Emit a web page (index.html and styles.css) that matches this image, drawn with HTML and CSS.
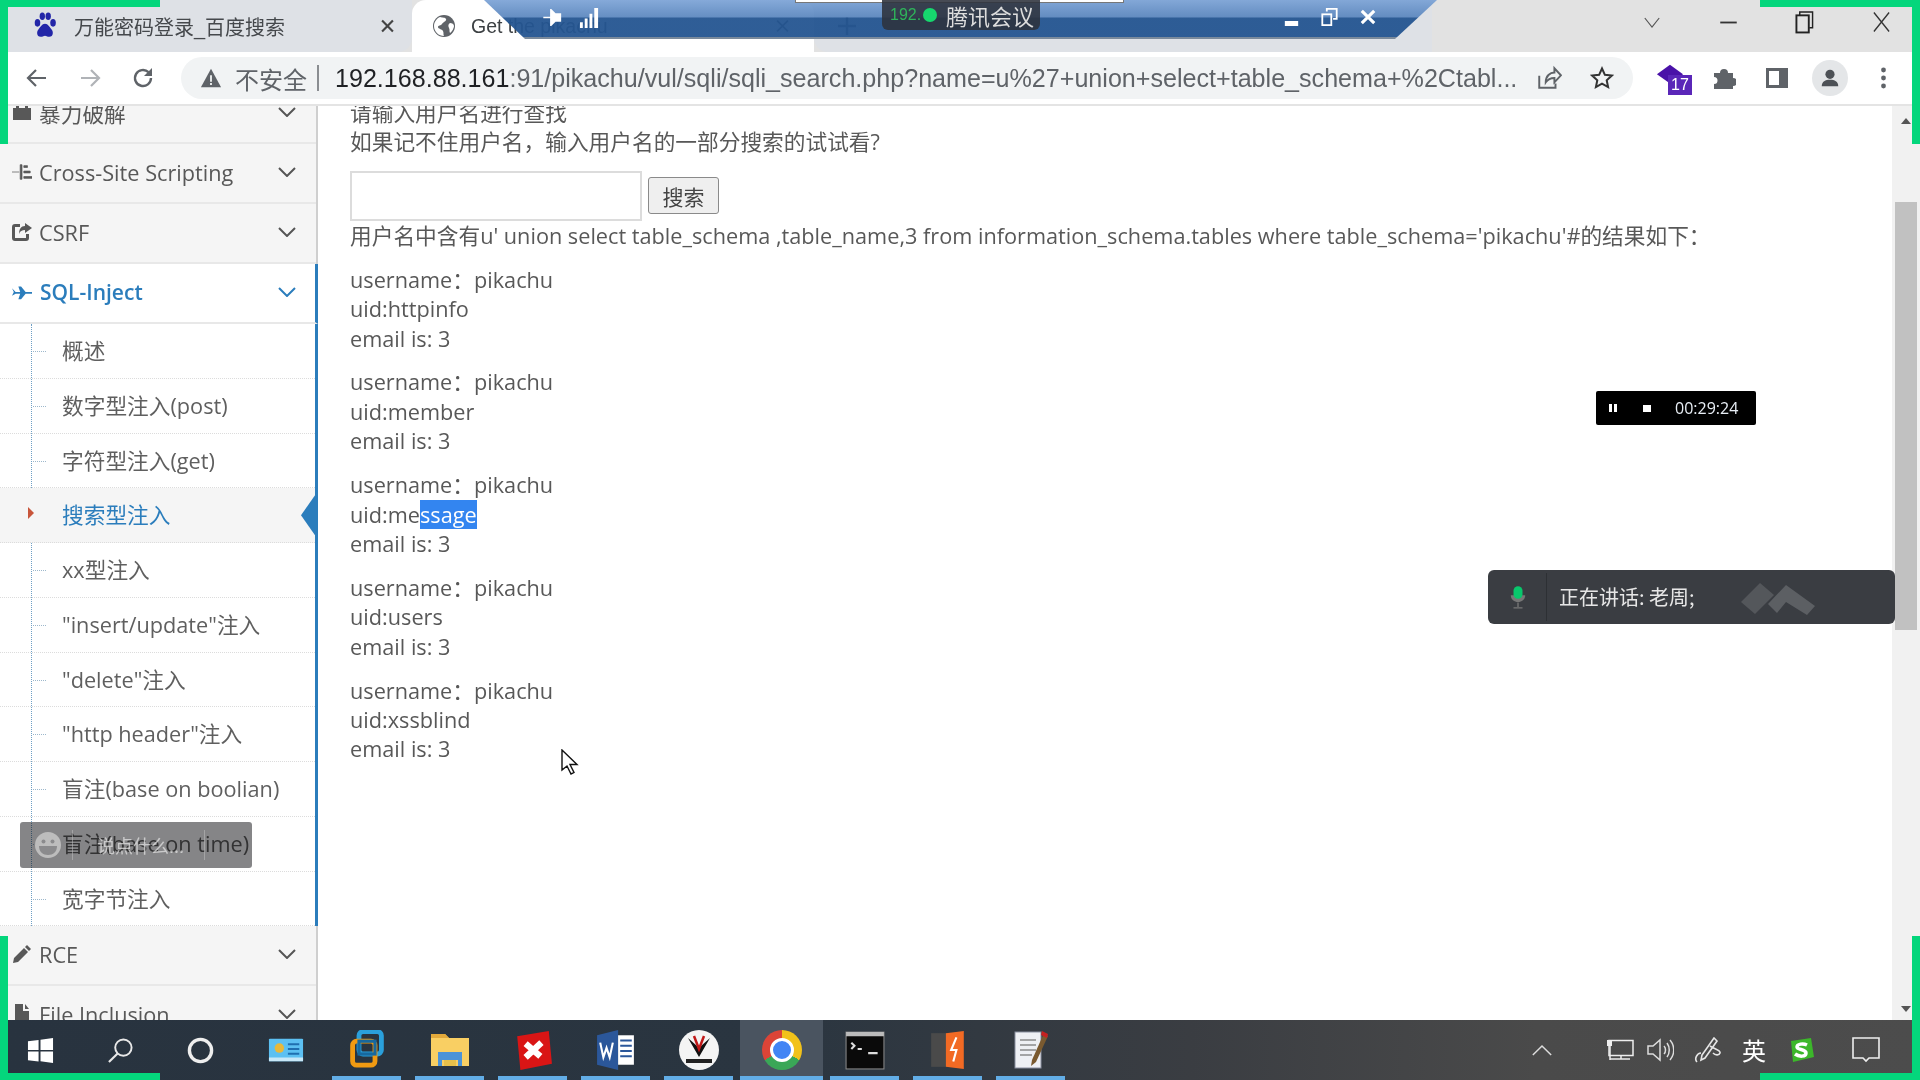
FILE: index.html
```html
<!DOCTYPE html>
<html lang="zh">
<head>
<meta charset="utf-8">
<title>Get the pikachu</title>
<link rel="stylesheet" href="styles.css">
</head>
<body>
<div class="screen">
  <header class="tabstrip">
    <div class="tab tab-inactive">
      <svg class="favicon" viewBox="0 0 24 28"><ellipse cx="5" cy="11" rx="2.6" ry="3.6" fill="#2326a8"/><ellipse cx="9.500" cy="5" rx="2.500" ry="3.500" fill="#2326a8"/><ellipse cx="15" cy="5" rx="2.500" ry="3.500" fill="#2326a8"/><ellipse cx="19.500" cy="11" rx="2.600" ry="3.600" fill="#2326a8"/><path d="M12 12c-3 0-4 3-6 5-2 2-2 7 2 7 2 0 3-1 4-1s2 1 4 1c4 0 4-5 2-7-2-2-3-5-6-5z" fill="#2326a8"/></svg>
      <span class="tab-title">万能密码登录_百度搜索</span>
      <svg class="tab-close" viewBox="0 0 12 12"><path d="M1 1l10 10M11 1L1 11" stroke="#444" stroke-width="2"/></svg>
    </div>
    <div class="tab tab-active">
      <svg class="globe" viewBox="0 0 24 24"><circle cx="12" cy="12" r="11" fill="#5f6368"/><path d="M8 3c3 1 5 0 6 2s-3 3-4 5-4 1-4 3 4 2 5 4 0 4 1 5c-5 0-10-4-10-10 0-4 3-8 6-9zM18 9c2 0 4 1 4 3s-2 6-4 7c-1-2 0-3-1-5s-1-4 1-5z" fill="#fff"/></svg>
      <span class="tab-title-active">Get the pikachu</span>
      <svg class="tab-close" viewBox="0 0 12 12"><path d="M1 1l10 10M11 1L1 11" stroke="#444" stroke-width="1.6"/></svg>
    </div>
    <div class="newtab-area">
      <svg class="plus" viewBox="0 0 20 20"><path d="M10 1v18M1 10h18" stroke="#4a4f55" stroke-width="2.4"/></svg>
    </div>
    <div class="window-controls">
      <svg class="wc wc-chevron" viewBox="0 0 20 12"><path d="M2 1l8 10 8-10" fill="none" stroke="#555" stroke-width="1.300"/></svg>
      <svg class="wc wc-min" viewBox="0 0 20 12"><path d="M1 6h18" stroke="#333" stroke-width="2"/></svg>
      <svg class="wc wc-max" viewBox="0 0 20 24"><rect x="1.500" y="5" width="13" height="18" fill="none" stroke="#222" stroke-width="2"/><path d="M5 5V1.500h13.500V18H15" fill="none" stroke="#222" stroke-width="1.500"/></svg>
      <svg class="wc wc-close" viewBox="0 0 20 24"><path d="M2 2l16 20M18 2L2 22" stroke="#333" stroke-width="1.400"/></svg>
    </div>
  </header>

  <nav class="toolbar">
    <svg class="tool tool-back" viewBox="0 0 24 24"><path d="M21 12H4M11 4l-8 8 8 8" fill="none" stroke="#5f6368" stroke-width="2.200"/></svg>
    <svg class="tool tool-fwd" viewBox="0 0 24 24"><path d="M3 12h17M13 4l8 8-8 8" fill="none" stroke="#b0b3b7" stroke-width="2.200"/></svg>
    <svg class="tool tool-reload" viewBox="0 0 24 24"><path d="M20 12a8 8 0 1 1-2.500-5.800" fill="none" stroke="#5f6368" stroke-width="2.400"/><path d="M21 2v8h-8z" fill="#5f6368"/></svg>
    <div class="omnibox">
      <svg class="warn" viewBox="0 0 24 24"><path d="M12 2L1 22h22z" fill="#5f6368"/><path d="M11 9h2v7h-2zM11 17.500h2v2h-2z" fill="#f1f3f4"/></svg>
      <span class="insecure">不安全</span>
      <span class="pipe"></span>
      <span class="url"><span class="host">192.168.88.161</span>:91/pikachu/vul/sqli/sqli_search.php?name=u%27+union+select+table_schema+%2Ctabl...</span>
      <svg class="omni-icon share" viewBox="0 0 24 24"><path d="M3 10v11h15v-4M9 16c0-6 4-9 8-9V3l6 6.500-6 6.500v-4c-3 0-6 1-8 4z" fill="none" stroke="#5f6368" stroke-width="1.800"/></svg>
      <svg class="omni-icon star" viewBox="0 0 24 24"><path d="M12 2.500l2.900 6.300 6.900.8-5.100 4.700 1.400 6.800-6.100-3.400-6.100 3.400 1.400-6.800L2.200 9.600l6.900-.8z" fill="none" stroke="#333" stroke-width="2"/></svg>
    </div>
    <div class="ext">
      <svg class="ext-shape" viewBox="0 0 30 26"><path d="M15 1l14 10-14 10L1 11z" fill="#4a12a8"/></svg>
      <span class="ext-badge">17</span>
    </div>
    <svg class="tool tool-puzzle" viewBox="0 0 24 24"><path d="M2 7h6a4 4 0 0 1 8 0h5v5a4 4 0 0 1 0 8v3H2v-5a3.500 3.500 0 0 0 0-7z" fill="#5f6368"/></svg>
    <svg class="tool tool-panel" viewBox="0 0 24 24"><path d="M1 2h22v20H1zM4 5v14h10V5z" fill="#5f6368" fill-rule="evenodd"/></svg>
    <div class="avatar"><svg viewBox="0 0 24 24"><circle cx="12" cy="8" r="5" fill="#4d5156"/><path d="M3 21c0-5 4-7 9-7s9 2 9 7z" fill="#4d5156"/></svg></div>
    <svg class="tool tool-kebab" viewBox="0 0 6 24"><circle cx="3" cy="4" r="2.400" fill="#5f6368"/><circle cx="3" cy="12" r="2.400" fill="#5f6368"/><circle cx="3" cy="20" r="2.400" fill="#5f6368"/></svg>
  </nav>

  <div class="viewport">
    <aside class="sidebar">
      <ul class="menu">
        <li class="menu-item"><svg class="mi" viewBox="0 0 20 20"><path d="M1 6h3V3h3v3h6V3h3v3h3v12H1z" fill="#585858"/></svg><span>暴力破解</span><svg class="chev" viewBox="0 0 18 10"><path d="M1 1l8 8 8-8" fill="none" stroke="#555" stroke-width="2"/></svg></li>
        <li class="menu-item"><svg class="mi" viewBox="0 0 22 20"><path d="M0 10h8M9 2h2v16H9zM13 3h4v2h-4zM13 9h7v2h-7zM13 15h9v2h-9z" fill="#585858" stroke="#585858" stroke-width=".8"/></svg><span>Cross-Site Scripting</span><svg class="chev" viewBox="0 0 18 10"><path d="M1 1l8 8 8-8" fill="none" stroke="#555" stroke-width="2"/></svg></li>
        <li class="menu-item"><svg class="mi" viewBox="0 0 20 20"><path d="M14 12v4H3V5h5V2H3a3 3 0 0 0-3 3v11a3 3 0 0 0 3 3h11a3 3 0 0 0 3-3v-4z" fill="#585858"/><path d="M13 1l7 5-7 5V8c-3 0-5 1-6 4 0-5 2-8 6-8z" fill="#585858"/></svg><span>CSRF</span><svg class="chev" viewBox="0 0 18 10"><path d="M1 1l8 8 8-8" fill="none" stroke="#555" stroke-width="2"/></svg></li>
        <li class="menu-item menu-open"><svg class="mi" viewBox="0 0 22 20"><path d="M0 6l2 4-2 4 4-2h5l-2 6 3 0 5-6h7v-2h-7L10 4H7l2 6H4z" fill="#2b7dbc"/></svg><span>SQL-Inject</span><svg class="chev" viewBox="0 0 18 10"><path d="M1 1l8 8 8-8" fill="none" stroke="#2b7dbc" stroke-width="2"/></svg></li>
        <li class="submenu">
          <ul class="sublist">
            <li class="sub-item">概述</li>
            <li class="sub-item">数字型注入(post)</li>
            <li class="sub-item">字符型注入(get)</li>
            <li class="sub-item sub-active">搜索型注入</li>
            <li class="sub-item">xx型注入</li>
            <li class="sub-item">"insert/update"注入</li>
            <li class="sub-item">"delete"注入</li>
            <li class="sub-item">"http header"注入</li>
            <li class="sub-item">盲注(base on boolian)</li>
            <li class="sub-item">盲注(base on time)</li>
            <li class="sub-item">宽字节注入</li>
          </ul>
        </li>
        <li class="menu-item"><svg class="mi" viewBox="0 0 20 20"><path d="M15 1l4 4-2 2-4-4zM12 4l4 4L6 18l-5 1 1-5z" fill="#585858"/></svg><span>RCE</span><svg class="chev" viewBox="0 0 18 10"><path d="M1 1l8 8 8-8" fill="none" stroke="#555" stroke-width="2"/></svg></li>
        <li class="menu-item"><svg class="mi" viewBox="0 0 20 20"><path d="M3 0h8v7h6v13H3zM13 0l4 5h-4z" fill="#585858"/></svg><span>File Inclusion</span><svg class="chev" viewBox="0 0 18 10"><path d="M1 1l8 8 8-8" fill="none" stroke="#555" stroke-width="2"/></svg></li>
      </ul>
    </aside>

    <main class="content">
      <p class="intro">请输入用户名进行查找<br>如果记不住用户名，输入用户名的一部分搜索的试试看?</p>
      <form class="search">
        <input class="search-input" type="text">
        <button class="search-btn" type="button">搜索</button>
      </form>
      <p class="summary">用户名中含有u' union select table_schema ,table_name,3 from information_schema.tables where table_schema='pikachu'#的结果如下：</p>
      <p class="record">username：pikachu<br>uid:httpinfo<br>email is: 3</p>
      <p class="record">username：pikachu<br>uid:member<br>email is: 3</p>
      <p class="record">username：pikachu<br>uid:me<span class="selected">ssage</span><br>email is: 3</p>
      <p class="record">username：pikachu<br>uid:users<br>email is: 3</p>
      <p class="record">username：pikachu<br>uid:xssblind<br>email is: 3</p>
    </main>

    <div class="scrollbar">
      <span class="sb-arrow"></span>
      <span class="sb-thumb"></span>
      <span class="sb-arrow sb-arrow-down"></span>
    </div>
  </div>

  <footer class="taskbar">
    <div class="task task-start"><svg viewBox="0 0 28 28"><path d="M1 4.500l11-1.500v10.500H1zM14 2.800L27 1v12.500H14zM1 15h11v10.500L1 24zM14 15h13v12l-13-1.800z" fill="#fff"/></svg></div>
    <div class="task task-start"><svg viewBox="0 0 28 28"><circle cx="17" cy="11" r="8.500" fill="none" stroke="#e8e8e8" stroke-width="2"/><path d="M11 17L2 26" stroke="#e8e8e8" stroke-width="2.200"/></svg></div>
    <div class="task task-start"><svg viewBox="0 0 28 28"><circle cx="14" cy="14" r="11.500" fill="none" stroke="#eee" stroke-width="3.500"/></svg></div>
    <div class="task task-start task-card"><svg viewBox="0 0 38 26"><rect x="1" y="1" width="36" height="24" rx="1" fill="#5cc0f2"/><circle cx="12" cy="11" r="5" fill="#e8b83a"/><path d="M21 7h12M21 12h12M21 17h12" stroke="#1f6fb0" stroke-width="2"/><path d="M1 21h36v4H1z" fill="#c8e8f8"/></svg></div>
    <div class="task open"><svg viewBox="0 0 42 50"><rect x="11" y="2" width="28" height="28" rx="5" fill="none" stroke="#2aa0dc" stroke-width="6"/><rect x="3" y="14" width="28" height="30" rx="5" fill="none" stroke="#f09a12" stroke-width="6"/><rect x="11" y="14" width="20" height="16" fill="none" stroke="#17689e" stroke-width="4"/></svg></div>
    <div class="task open"><svg viewBox="0 0 40 40"><path d="M1 4h14l4 4h20v28H1z" fill="#f9cf63"/><path d="M1 4h14l4 4H1z" fill="#e2a93b"/><path d="M8 22h24v14h-4v-6H12v6H8z" fill="#4c93d8"/><rect x="14" y="30" width="12" height="6" fill="#e8c04a"/></svg></div>
    <div class="task open"><svg viewBox="0 0 36 38"><path d="M3 6l30-5 3 31-30 6z" fill="#d91515"/><path d="M11 13l14 12M26 12L11 26" stroke="#fff" stroke-width="6"/></svg></div>
    <div class="task open"><svg viewBox="0 0 36 38"><path d="M0 5l20-5v38L0 33z" fill="#2b579a"/><path d="M20 5h15v28H20z" fill="#fff"/><path d="M22 10h11M22 15h11M22 20h11M22 25h11" stroke="#2b579a" stroke-width="2"/><path d="M3 12l3 14 3-9 3 9 3-14" fill="none" stroke="#fff" stroke-width="2"/></svg></div>
    <div class="task open"><svg viewBox="0 0 40 40"><circle cx="20" cy="20" r="20" fill="#f4f4f4"/><path d="M9 8l11 19L31 8l-9 8h-4z" fill="#111"/><path d="M15 6l5 13 5-13" fill="none" stroke="#c01818" stroke-width="2.500"/><path d="M7 29h26v4H7z" fill="#222"/></svg></div>
    <div class="task open task-chrome"><span class="chrome-logo"><span class="chrome-core"></span></span></div>
    <div class="task open"><svg viewBox="0 0 38 38"><rect x="1" y="2" width="36" height="35" fill="#0a0a0a" stroke="#888"/><path d="M1 2h36v4H1z" fill="#bbb"/><path d="M6 12l3 3-3 3M12 18h4M22 22h9" stroke="#ddd" stroke-width="2" fill="none"/></svg></div>
    <div class="task open"><svg viewBox="0 0 34 38"><path d="M1 3h18v32H1z" fill="#4a4a4a"/><path d="M15 3l17-2v36l-17-2z" fill="#f26a24"/><path d="M25 7l-5 12h5l-3 11" fill="none" stroke="#fff" stroke-width="2"/></svg></div>
    <div class="task open"><svg viewBox="0 0 34 40"><rect x="1" y="2" width="26" height="36" fill="#eef0f4" stroke="#8a8fa0"/><path d="M6 10h16M6 15h16M6 20h16M6 25h12" stroke="#8a8a8a" stroke-width="1.500"/><path d="M30 3L18 30l-1 6 5-4L34 6z" fill="#7a5a30"/><path d="M28 1l6 3-1 4-6-3z" fill="#c42020"/></svg></div>
    <div class="tray">
      <svg class="tray-chevron" viewBox="0 0 24 14"><path d="M2 12L12 2l10 10" fill="none" stroke="#ddd" stroke-width="1.600"/></svg>
      <svg class="tray-net" viewBox="0 0 28 22"><rect x="3" y="1.500" width="24" height="15" fill="none" stroke="#eee" stroke-width="1.500"/><rect x="1" y="1" width="5" height="6" fill="#eee"/><path d="M4 7v14M4 20h20M15 17v3" stroke="#eee" stroke-width="1.500"/></svg>
      <svg class="tray-vol" viewBox="0 0 28 24"><path d="M2 8h5l7-6v20l-7-6H2z" fill="none" stroke="#ddd" stroke-width="1.500"/><path d="M18 8c2 2 2 6 0 8M21 5c3 4 3 10 0 14M24 2c5 6 5 14 0 20" fill="none" stroke="#ddd" stroke-width="1.500"/></svg>
      <svg class="tray-pen" viewBox="0 0 28 26"><path d="M20 1L8 18l-1 5 4-2L23 4zM3 25c-3-3 0-9 4-9M16 9c4 3 11 4 10 7s-5 2-7 0" fill="none" stroke="#e6e6e6" stroke-width="1.600"/></svg>
      <span class="tray-ime">英</span>
      <svg class="tray-sogou" viewBox="0 0 26 26"><path d="M3 4l20-3 3 19-21 5z" fill="#3cb72a"/><path d="M19 8c-4-2-10-1-10 2s9 2 9 6-7 4-11 1" fill="none" stroke="#fff" stroke-width="3.500"/></svg>
      <svg class="tray-notify" viewBox="0 0 28 26"><path d="M1 1h26v20H17l-3 3-3-3H1z" fill="none" stroke="#eee" stroke-width="1.600"/></svg>
    </div>
  </footer>

  <!-- floating overlays from the screen recorder and the meeting app -->
  <div class="meeting-trapezoid"></div>
  <div class="meeting-paper"></div>
  <svg class="meet-icon meet-pin" viewBox="0 0 24 20"><path d="M0 10h8M9 1v18l5-5h6V6h-6z" fill="#fff" stroke="#fff" stroke-width="2"/></svg>
  <svg class="meet-icon meet-signal" viewBox="0 0 22 22"><path d="M1 16h3v6H1zM6 12h3v10H6zM11 7h3v15h-3zM16 1h4v21h-4z" fill="#fff"/></svg>
  <div class="meeting-pill"><span class="pill-ip">192.1</span><span class="pill-dot"></span><span class="pill-name">腾讯会议</span></div>
  <svg class="meet-icon meet-min" viewBox="0 0 16 6"><rect width="16" height="6" fill="#fff"/></svg>
  <svg class="meet-icon meet-max" viewBox="0 0 18 20"><rect x="1" y="7" width="10" height="12" fill="none" stroke="#fff" stroke-width="2"/><path d="M6 4V1h11v11h-4" fill="none" stroke="#fff" stroke-width="2"/></svg>
  <svg class="meet-icon meet-close" viewBox="0 0 18 18"><path d="M2 2l14 14M16 2L2 16" stroke="#fff" stroke-width="3.500"/></svg>

  <div class="recorder"><span class="rec-pause"></span><span class="rec-stop"></span><span class="rec-time">00:29:24</span></div>

  <div class="speaking">
    <svg class="mic" viewBox="0 0 20 26"><path d="M2 11c0 10 16 10 16 0" fill="#777"/><rect x="5" y="1" width="10" height="14" rx="5" fill="#08c86c"/><path d="M10 19v5M5 25h10" stroke="#777" stroke-width="1.500"/></svg>
    <span class="speak-text">正在讲话: 老周;</span>
    <svg class="speak-logo" viewBox="0 0 76 36"><path d="M1 22L20 3l14 12-19 19z" fill="#54575b"/><path d="M28 24L46 5l29 21-8 9-21-13-9 11z" fill="#5c5f63"/></svg>
  </div>

  <div class="chat-hint">
    <span class="smile"><svg viewBox="0 0 26 26"><circle cx="13" cy="13" r="13" fill="#bdbdbd"/><circle cx="8.500" cy="9.500" r="2" fill="#8b8b8d"/><circle cx="17.500" cy="9.500" r="2" fill="#8b8b8d"/><path d="M4 14h18c0 6-4 9-9 9s-9-3-9-9z" fill="#8b8b8d"/></svg></span>
    <span class="hint-sep"></span>
    <span class="hint-text">说点什么...</span>
    <span class="hint-sep"></span>
  </div>

  <svg class="cursor" viewBox="0 0 18 26"><path d="M1 1v20l5-4 4 8 3-1.500-4-8h7z" fill="#fff" stroke="#111" stroke-width="1.400"/></svg>

  <div class="frame frame-tl"></div>
  <div class="frame frame-lt"></div>
  <div class="frame frame-lb"></div>
  <div class="frame frame-bl"></div>
  <div class="frame frame-tr"></div>
  <div class="frame frame-rt"></div>
  <div class="frame frame-rb"></div>
  <div class="frame frame-br"></div>
</div>
</body>
</html>
```

FILE: styles.css
```css
* { box-sizing: border-box; }
html, body { margin: 0; padding: 0; }
body { font-family: "Open Sans", "Noto Sans CJK SC", sans-serif; background: #fff; }
ul { list-style: none; margin: 0; padding: 0; }

.screen {
  position: relative;
  width: 1920px;
  height: 1080px;
  overflow: hidden;
  display: flex;
  flex-direction: column;
}

/* tab strip */
.tabstrip {
  flex: none;
  height: 52px;
  display: flex;
  background: #e2e2e2;
}
.tab { display: flex; align-items: center; height: 52px; flex: none; }
.tab-inactive {
  width: 404px;
  margin-left: 8px;
  padding-left: 24px;
  background: #dee1e6;
  border-radius: 0 0 14px 0;
}
.favicon { width: 26px; height: 30px; margin-right: 16px; flex: none; }
.tab-title { width: 307px; flex: none; font-family: "Liberation Sans", "Noto Sans CJK SC", sans-serif; font-size: 20px; color: #45484c; white-space: nowrap; }
.tab-close { width: 13px; height: 14px; flex: none; }
.tab-active {
  width: 402px;
  padding-left: 20px;
  background: #fff;
  border-radius: 14px 14px 0 0;
}
.globe { width: 24px; height: 24px; margin-right: 15px; flex: none; }
.tab-title-active { width: 305px; flex: none; font-family: "Liberation Sans", sans-serif; font-size: 19.500px; color: #3c4043; white-space: nowrap; }
.newtab-area {
  width: 618px;
  padding-left: 23px;
  display: flex;
  align-items: center;
  background: #dee1e6;
  border-radius: 14px 0 0 14px;
}
.plus { width: 20px; height: 20px; }
.window-controls { flex: 1; display: flex; align-items: center; padding-left: 211px; height: 44px; }
.wc { flex: none; }
.wc-chevron { width: 18px; height: 11px; margin-right: 58px; }
.wc-min { width: 19px; height: 11px; margin-right: 57px; }
.wc-max { width: 19px; height: 24px; margin-right: 58px; }
.wc-close { width: 19px; height: 24px; }

/* toolbar */
.toolbar {
  flex: none;
  height: 54px;
  display: flex;
  align-items: center;
  background: #fff;
  border-bottom: 2px solid #e4e4e4;
  padding-left: 25px;
}
.tool { flex: none; width: 24px; height: 24px; }
.tool-back { margin-right: 29px; }
.tool-fwd { margin-right: 29px; }
.tool-reload { margin-right: 26px; }
.omnibox {
  flex: none;
  width: 1452px;
  height: 42px;
  margin-right: 24px;
  padding-left: 19px;
  display: flex;
  align-items: center;
  background: #f1f3f4;
  border-radius: 21px;
}
.warn { width: 22px; height: 22px; margin-right: 13px; flex: none; }
.insecure { font-family: "Liberation Sans", "Noto Sans CJK SC", sans-serif; font-size: 24px; color: #5f6368; width: 72px; flex: none; white-space: nowrap; }
.pipe { width: 2px; height: 26px; background: #8a8d91; margin: 0 16px 0 10px; flex: none; }
.url { flex: none; width: 1200px; font-family: "Liberation Sans", sans-serif; font-size: 25.100px; color: #5f6368; white-space: nowrap; }
.host { color: #1f2124; }
.omni-icon { flex: none; width: 26px; height: 26px; }
.share { margin-left: 1px; margin-right: 28px; }
.star { width: 24px; height: 24px; }
.ext { position: relative; width: 38px; height: 44px; margin-right: 17px; flex: none; }
.ext-shape { position: absolute; left: -1px; top: 7px; width: 28px; height: 26px; }
.ext-badge {
  position: absolute;
  left: 11px;
  top: 19px;
  width: 24px;
  height: 20px;
  background: #5a26b8;
  color: #fff;
  font: 16px/20px "Liberation Sans", sans-serif;
  text-align: center;
}
.tool-puzzle { margin-right: 29px; }
.tool-panel { margin-right: 23px; }
.avatar {
  flex: none;
  width: 36px;
  height: 36px;
  border-radius: 50%;
  background: #e4e6e8;
  padding: 7px;
  margin-right: 32px;
  display: flex;
}
.tool-kebab { width: 7px; height: 24px; }

/* page area */
.viewport {
  flex: 1;
  min-height: 0;
  display: flex;
  overflow: hidden;
  background: #fff;
}
.sidebar {
  flex: none;
  width: 318px;
  height: 1000px;
  margin-top: -22px;
  background: #f5f5f5;
  border-right: 2px solid #cfcfcf;
}
.menu-item {
  display: flex;
  align-items: center;
  height: 60px;
  padding-left: 12px;
  padding-bottom: 2px;
  font-size: 21.700px;
  color: #585858;
  background: #f5f5f5;
  border-bottom: 2px solid #e8e8e8;
}
.mi { width: 20px; height: 20px; margin-right: 7px; flex: none; }
.chev { width: 18px; height: 10px; margin-left: auto; margin-right: 20px; flex: none; }
.menu-open {
  background: #fff;
  color: #2b7dbc;
  font-size: 21px;
  font-weight: 600;
  margin-right: -2px;
  border-right: 3px solid #2b7dbc;
}
.menu-open .mi { margin-right: 8px; }
.menu-open .chev { margin-right: 19px; }
.submenu { margin-right: -2px; border-right: 3px solid #2b7dbc; background: #fff; }
.sublist { position: relative; padding: 0; background: #fff; }
.sublist::before {
  content: "";
  position: absolute;
  left: 31px;
  top: 0;
  bottom: 0;
  border-left: 1px dotted #6d9fc5;
}
.sub-item {
  position: relative;
  height: 54.750px;
  padding-left: 62px;
  font-size: 21.700px;
  line-height: 53px;
  color: #5f5f5f;
  border-bottom: 1px dotted #dcdcdc;
  white-space: nowrap;
}
.sub-item::before {
  content: "";
  position: absolute;
  left: 33px;
  top: 27px;
  width: 13px;
  border-top: 1px dotted #9db8cc;
}
.sub-active { color: #2b7dbc; background: #f5f5f5; }
.sub-active::before {
  left: 28px;
  top: 19px;
  width: 0;
  border-top: 6px solid transparent;
  border-bottom: 6px solid transparent;
  border-left: 6px solid #c8553a;
}
.sub-active::after {
  content: "";
  position: absolute;
  right: 0;
  top: 7px;
  width: 14px;
  height: 40px;
  background: #2b7dbc;
  clip-path: polygon(100% 0, 100% 100%, 0 50%);
}

.content {
  flex: 1;
  min-width: 0;
  margin-top: -8px;
  padding-left: 32px;
  font-size: 21.700px;
  line-height: 29.400px;
  color: #585858;
}
.content p { margin: 0; white-space: nowrap; }
.search { display: flex; align-items: center; gap: 6px; height: 50px; margin: 14px 0 0; }
.search-input { width: 292px; height: 50px; border: 2px solid #dcdcdc; background: #fff; }
.search-btn {
  width: 71px;
  height: 37px;
  padding: 0;
  border: 1px solid #8a8a8a;
  border-radius: 3px;
  background: #efefef;
  font: 21px "Noto Sans CJK SC", sans-serif;
  color: #444;
}
.content .record { margin-top: 14.500px; }
.selected { background: #3385f0; color: #fff; }

.scrollbar {
  flex: none;
  width: 28px;
  display: flex;
  flex-direction: column;
  align-items: center;
  background: #f1f1f1;
  padding-top: 12px;
  padding-bottom: 8px;
}
.sb-arrow {
  width: 0;
  height: 0;
  border-left: 5px solid transparent;
  border-right: 5px solid transparent;
  border-bottom: 6px solid #555;
}
.sb-arrow-down { border-bottom: 0; border-top: 6px solid #555; margin-top: auto; }
.sb-thumb { width: 22px; height: 428px; margin-top: 78px; background: #c1c1c1; }

/* taskbar */
.taskbar {
  flex: none;
  height: 60px;
  display: flex;
  background: linear-gradient(90deg, #28333f 0%, #2a3540 40%, #3a3d42 62%, #4a4a4a 80%, #4c4c4c 100%);
}
.task { position: relative; flex: none; width: 83px; height: 60px; display: flex; align-items: center; justify-content: center; }
.task svg { width: 40px; height: 40px; }
.task-start { width: 80px; }
.task-start svg { width: 27px; height: 27px; }
.task-card { width: 85px; padding-left: 6px; }
.task-card svg { width: 36px; height: 26px; }
.open::after {
  content: "";
  position: absolute;
  left: 7px;
  right: 7px;
  bottom: 0;
  height: 4px;
  background: #62ade6;
}
.task-chrome { background: #4a5460; }
.task-chrome::after { left: 0; right: 0; }
.chrome-logo {
  width: 40px;
  height: 40px;
  border-radius: 50%;
  background: conic-gradient(#f2c21a 0 120deg, #3aa757 120deg 240deg, #dc4437 240deg 360deg);
  display: flex;
  align-items: center;
  justify-content: center;
}
.chrome-core { width: 18px; height: 18px; border-radius: 50%; background: #4285f4; border: 3px solid #fff; box-sizing: content-box; }
.tray { flex: 1; display: flex; align-items: center; padding-left: 459px; }
.tray svg { flex: none; }
.tray-chevron { width: 22px; height: 13px; margin-right: 53px; }
.tray-net { width: 28px; height: 22px; margin-right: 12px; }
.tray-vol { width: 28px; height: 24px; margin-right: 20px; }
.tray-pen { width: 28px; height: 26px; margin-right: 20px; }
.tray-ime { width: 26px; font: 24px/1 "Noto Sans CJK SC", sans-serif; color: #fff; margin-right: 20px; }
.tray-sogou { width: 26px; height: 26px; margin-right: 38px; }
.tray-notify { width: 28px; height: 26px; }

/* meeting overlay */
.meeting-trapezoid {
  position: absolute;
  left: 484px;
  top: 0;
  width: 953px;
  height: 39px;
  clip-path: polygon(0 0, 100% 0, 911px 39px, 41px 39px);
  background: linear-gradient(180deg, rgba(124,163,214,.93) 0, rgba(90,134,190,.93) 17px, rgba(36,85,145,.95) 18px, rgba(36,85,145,.95) 37px, #7a8a9c 37px);
}
.meeting-paper {
  position: absolute;
  left: 795px;
  top: 0;
  width: 329px;
  height: 3px;
  background: #fff;
  border: 1px solid #777;
  border-top: 0;
}
.meeting-pill {
  position: absolute;
  left: 882px;
  top: 0;
  width: 158px;
  height: 30px;
  display: flex;
  align-items: center;
  padding-left: 8px;
  background: rgba(45,50,60,.88);
  border-radius: 0 0 6px 6px;
  font: 22px/1 "Noto Sans CJK SC", sans-serif;
  color: #ddd;
  white-space: nowrap;
}
.pill-ip { width: 30px; overflow: hidden; color: #2fb45a; font-size: 16px; margin-right: 3px; font-family: "Liberation Sans", sans-serif; }
.pill-dot { width: 14px; height: 14px; border-radius: 50%; background: #16d86e; margin-right: 9px; flex: none; }
.meet-icon { position: absolute; }
.meet-pin { left: 543px; top: 9px; width: 21px; height: 17px; }
.meet-signal { left: 579px; top: 7px; width: 21px; height: 21px; }
.meet-min { left: 1284px; top: 21px; width: 15px; height: 5px; }
.meet-max { left: 1321px; top: 8px; width: 17px; height: 18px; }
.meet-close { left: 1360px; top: 9px; width: 16px; height: 16px; }

.recorder {
  position: absolute;
  left: 1596px;
  top: 391px;
  width: 160px;
  height: 34px;
  display: flex;
  align-items: center;
  padding-left: 13px;
  background: #000;
  border-radius: 2px;
  color: #e8eef5;
  font: 16px "Open Sans", sans-serif;
}
.rec-pause { width: 8px; height: 8px; border-left: 3px solid #fff; border-right: 3px solid #fff; margin-right: 26px; }
.rec-stop { width: 8px; height: 7px; background: #fff; margin-right: 24px; }

.speaking {
  position: absolute;
  left: 1488px;
  top: 570px;
  width: 407px;
  height: 54px;
  display: flex;
  align-items: center;
  padding-left: 21px;
  background: #3a3d42;
  border-radius: 6px;
}
.mic { width: 18px; height: 24px; margin-right: 19px; flex: none; }
.speak-text {
  height: 48px;
  padding-left: 12px;
  border-left: 1px solid #2d3034;
  font: 20px/48px "Noto Sans CJK SC", sans-serif;
  color: #e6e6e6;
  white-space: nowrap;
  width: 194px;
  flex: none;
}
.speak-logo { width: 76px; height: 36px; margin-top: 2px; flex: none; }

.chat-hint {
  position: absolute;
  left: 20px;
  top: 822px;
  width: 232px;
  height: 46px;
  display: flex;
  align-items: center;
  padding-left: 15px;
  border-radius: 3px;
}
.chat-hint::before {
  content: "";
  position: absolute;
  inset: 0;
  background: #858587;
  border-radius: 3px;
  mix-blend-mode: multiply;
}
.chat-hint > span { position: relative; }
.smile { width: 26px; height: 26px; margin-right: 11px; display: flex; }
.hint-sep { width: 1px; height: 30px; background: rgba(190,190,190,.55); flex: none; }
.hint-text { width: 131px; padding-left: 24px; font: 18px "Noto Sans CJK SC", sans-serif; color: rgba(225,225,225,.75); white-space: nowrap; }

.cursor { position: absolute; left: 561px; top: 749px; width: 18px; height: 26px; }

/* recording frame */
.frame { position: absolute; background: #04d67c; }
.frame-tl { left: 0; top: 0; width: 160px; height: 7px; }
.frame-lt { left: 0; top: 0; width: 8px; height: 144px; }
.frame-lb { left: 0; top: 936px; width: 8px; height: 144px; }
.frame-bl { left: 0; top: 1073px; width: 160px; height: 7px; }
.frame-tr { left: 1760px; top: 0; width: 160px; height: 7px; }
.frame-rt { left: 1912px; top: 0; width: 8px; height: 144px; }
.frame-rb { left: 1912px; top: 936px; width: 8px; height: 144px; }
.frame-br { left: 1760px; top: 1073px; width: 160px; height: 7px; }
```
